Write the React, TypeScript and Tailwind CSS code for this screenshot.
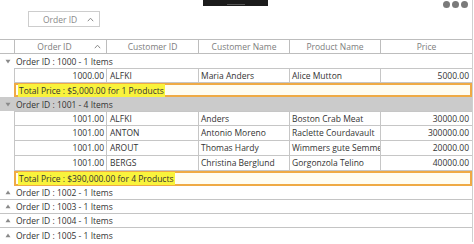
import React from "react";

type Row = {
  orderId: string;
  customerId: string;
  customerName: string;
  productName: string;
  price: string;
};

type Group = {
  id: number;
  count: number;
  expanded: boolean;
  selected?: boolean;
  rows?: Row[];
  total?: string;
};

const groups: Group[] = [
  {
    id: 1000,
    count: 1,
    expanded: true,
    rows: [
      { orderId: "1000.00", customerId: "ALFKI", customerName: "Maria Anders", productName: "Alice Mutton", price: "5000.00" },
    ],
    total: "Total Price : $5,000.00 for 1 Products",
  },
  {
    id: 1001,
    count: 4,
    expanded: true,
    selected: true,
    rows: [
      { orderId: "1001.00", customerId: "ALFKI", customerName: "Anders", productName: "Boston Crab Meat", price: "30000.00" },
      { orderId: "1001.00", customerId: "ANTON", customerName: "Antonio Moreno", productName: "Raclette Courdavault", price: "300000.00" },
      { orderId: "1001.00", customerId: "AROUT", customerName: "Thomas Hardy", productName: "Wimmers gute Semmelknödel", price: "20000.00" },
      { orderId: "1001.00", customerId: "BERGS", customerName: "Christina Berglund", productName: "Gorgonzola Telino", price: "40000.00" },
    ],
    total: "Total Price : $390,000.00 for 4 Products",
  },
  { id: 1002, count: 1, expanded: false },
  { id: 1003, count: 1, expanded: false },
  { id: 1004, count: 1, expanded: false },
  { id: 1005, count: 1, expanded: false },
];

const cols = "grid grid-cols-[14px_92px_92px_91px_91px_92px]";

const Caret = () => (
  <svg width="7" height="5" viewBox="0 0 7 5" className="shrink-0">
    <path d="M0.8 4.2 L3.5 1.2 L6.2 4.2" fill="none" stroke="#8a8a8a" strokeWidth="1" />
  </svg>
);

const Arrow = ({ down }: { down: boolean }) => (
  <svg width="6" height="5" viewBox="0 0 6 5" className="shrink-0">
    {down ? (
      <path d="M0.5 0.8 L5.5 0.8 L3 4.5 Z" fill="#8a8a8a" />
    ) : (
      <path d="M0.5 4.2 L5.5 4.2 L3 0.5 Z" fill="#8a8a8a" />
    )}
  </svg>
);

const GroupHeader = ({ g, last }: { g: Group; last: boolean }) => (
  <div
    className={`flex h-[14px] items-center gap-[5px] pl-[5px] text-[#333] ${
      g.selected ? "bg-[#cbcbcb]" : "bg-white"
    } ${!g.expanded && !last ? "border-b border-[#c4c4c4]" : ""}`}
  >
    <Arrow down={g.expanded} />
    <span>
      Order ID : {g.id} - {g.count} Items
    </span>
  </div>
);

const DataRow = ({ r, first }: { r: Row; first: boolean }) => (
  <div className={`${cols} h-[15px] text-[#333]`}>
    <div />
    <div className={`border-l border-b border-[#c6c6c6] pr-[2px] text-right ${first ? "border-t" : ""}`}>
      {r.orderId}
    </div>
    <div className={`border-l border-b border-[#c6c6c6] pl-[3px] ${first ? "border-t" : ""}`}>{r.customerId}</div>
    <div className={`border-l border-b border-[#c6c6c6] pl-[2px] ${first ? "border-t" : ""}`}>{r.customerName}</div>
    <div className={`overflow-hidden whitespace-nowrap border-l border-b border-[#c6c6c6] pl-[2px] ${first ? "border-t" : ""}`}>
      {r.productName}
    </div>
    <div className={`border-l border-b border-[#c6c6c6] pr-[3px] text-right ${first ? "border-t" : ""}`}>{r.price}</div>
  </div>
);

export default function App() {
  return (
    <div
      className="relative h-[244px] w-[474px] overflow-hidden bg-white text-[8.5px] leading-[13px]"
      style={{ fontFamily: '"Open Sans", "Noto Sans", sans-serif' }}
    >
      {/* dark bar overlaying the top edge */}
      <div className="absolute left-[203px] top-0 flex h-[6px] w-[65px] items-center justify-center bg-[#1b1b1b]">
        <div className="mt-[2px] h-[1px] w-[18px] bg-[#555]" />
      </div>

      <div className="w-[473px] border-r border-[#cfcfcf]">
        {/* group drop area */}
        <div className="flex h-[39px] items-start justify-between">
          <div className="ml-[28px] mt-[11px] flex h-[16px] w-[72px] items-center border border-[#cdcdcd] pl-[14px] pr-[5px] text-[#8a8a8a]">
            <span className="flex-1">Order ID</span>
            <Caret />
          </div>
          <div className="mr-[4px] mt-[1px] flex gap-[2px]">
            <span className="h-[7px] w-[7px] rounded-full bg-[#7a7a7a]" />
            <span className="h-[7px] w-[7px] rounded-full bg-[#7a7a7a]" />
            <span className="h-[7px] w-[7px] rounded-full bg-[#7a7a7a]" />
          </div>
        </div>

        {/* column headers */}
        <div className={`${cols} h-[15px] border-y border-[#bdbdbd] text-[#7d7d7d]`}>
          <div />
          <div className="flex items-center border-l border-[#bdbdbd] pr-[5px]">
            <span className="flex-1 text-center">Order ID</span>
            <Caret />
          </div>
          <div className="flex items-center justify-center border-l border-[#bdbdbd]">Customer ID</div>
          <div className="flex items-center justify-center border-l border-[#bdbdbd]">Customer Name</div>
          <div className="flex items-center justify-center border-l border-[#bdbdbd]">Product Name</div>
          <div className="flex items-center justify-center border-l border-[#bdbdbd]">Price</div>
        </div>

        {groups.map((g, gi) => (
          <div key={g.id}>
            <GroupHeader g={g} last={gi === groups.length - 1} />
            {g.expanded && g.rows && (
              <>
                {g.rows.map((r, i) => (
                  <DataRow key={i} r={r} first={i === 0} />
                ))}
                <div
                  className={`ml-[14px] flex items-center border-2 border-[#efaa45] bg-[#fffdf2] pl-[2px] text-[#333] ${
                    gi === 0 ? "h-[14px]" : "h-[15px]"
                  }`}
                >
                  <span className="bg-[#f9f33c] px-[1px]">{g.total}</span>
                </div>
              </>
            )}
          </div>
        ))}
      </div>
    </div>
  );
}
